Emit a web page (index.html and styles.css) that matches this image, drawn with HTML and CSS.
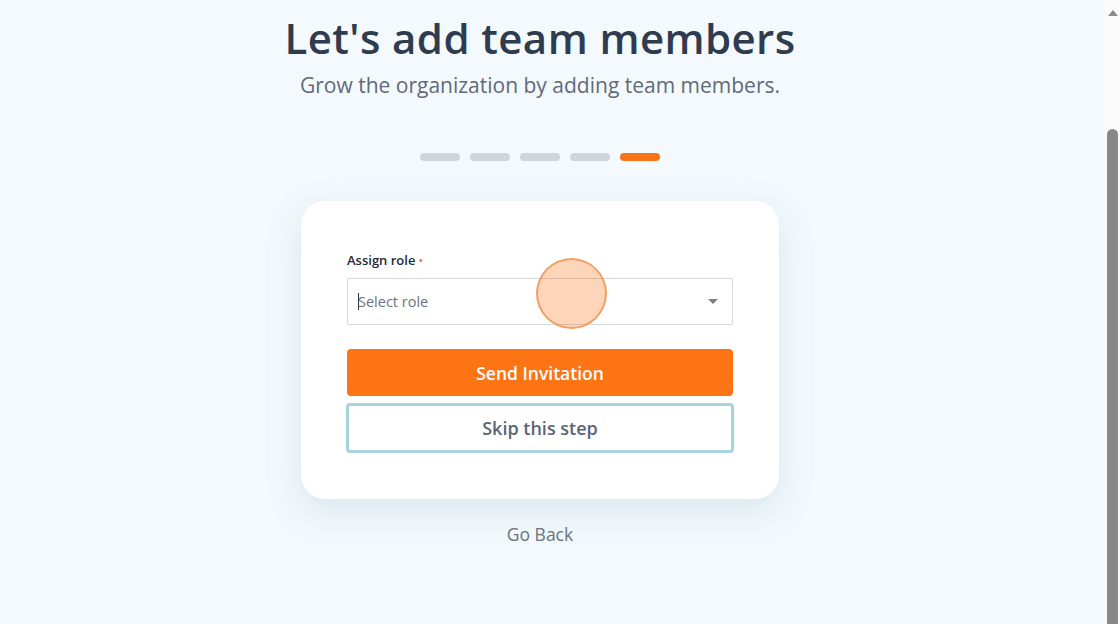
FILE: index.html
```html
<!DOCTYPE html>
<html lang="en">
<head>
  <meta charset="UTF-8">
  <title>Add team members</title>
  <link rel="stylesheet" href="styles.css">
</head>
<body>
  <div class="page">
    <h1 class="title">Let's add team members</h1>
    <p class="subtitle">Grow the organization by adding team members.</p>

    <div class="steps">
      <span class="step"></span>
      <span class="step"></span>
      <span class="step"></span>
      <span class="step"></span>
      <span class="step active"></span>
    </div>

    <div class="card">
      <label class="label">Assign role <span class="req">&bull;</span></label>
      <div class="select">
        <span class="placeholder"><i class="cursor"></i>Select role</span>
        <span class="caret"></span>
        <span class="click"></span>
      </div>
      <button class="btn btn-primary">Send Invitation</button>
      <button class="btn btn-skip">Skip this step</button>
    </div>

    <a class="back">Go Back</a>
  </div>
  <!-- window scrollbar, page is scrolled down -->
  <div class="scrollbar">
    <span class="arrow"></span>
    <span class="thumb"></span>
  </div>
</body>
</html>
```

FILE: styles.css
```css
/*common*/
* {
  box-sizing: border-box;
  margin: 0;
  padding: 0;
}
body {
  height: 624px;
  overflow: hidden;
  display: flex;
  background: #f3f9fc;
  font-family: "Open Sans", "Liberation Sans", sans-serif;
  color: #2f3b4f;
}
.page {
  flex: 1;
  display: flex;
  flex-direction: column;
  align-items: center;
  padding: 13px 25px 0 0;
}
.title {
  font-size: 42px;
  line-height: 50px;
  font-weight: 600;
  color: #2f3b4f;
  letter-spacing: 0.4px;
}
.subtitle {
  margin-top: 8px;
  font-size: 21px;
  line-height: 28px;
  color: #5f6a7b;
}
.steps {
  display: flex;
  gap: 10px;
  margin-top: 54px;
}
.step {
  width: 40px;
  height: 8px;
  border-radius: 4px;
  background: #d1d5db;
}
.step.active {
  background: #f97316;
}
.card {
  margin-top: 40px;
  width: 478px;
  padding: 50px 46px 46px;
  background: #fff;
  border-radius: 24px;
  box-shadow: 0 12px 32px rgba(150, 185, 205, 0.28);
  display: flex;
  flex-direction: column;
}
.label {
  display: block;
  height: 18px;
  font-size: 13px;
  line-height: 18px;
  font-weight: 600;
  color: #1f2937;
}
.req {
  color: #f97316;
  font-size: 11px;
}
.select {
  position: relative;
  margin-top: 9px;
  height: 47px;
  border: 1px solid #d4d7dc;
  border-radius: 2px;
  display: flex;
  align-items: center;
  justify-content: space-between;
  padding: 0 14px 0 10px;
}
.placeholder {
  font-size: 14.5px;
  color: #6b7280;
  display: flex;
  align-items: center;
}
.cursor {
  display: inline-block;
  width: 1px;
  height: 17px;
  background: #333;
  margin-right: -1px;
}
.caret {
  width: 0;
  height: 0;
  border-left: 5px solid transparent;
  border-right: 5px solid transparent;
  border-top: 5px solid #808080;
}
.click {
  position: absolute;
  left: 188px;
  top: -21px;
  width: 71px;
  height: 71px;
  border-radius: 50%;
  background: rgba(249, 115, 22, 0.3);
  border: 2px solid rgba(240, 140, 70, 0.75);
}
.btn {
  font-family: inherit;
  font-size: 17.5px;
  font-weight: 600;
  height: 47px;
  border-radius: 4px;
  cursor: pointer;
}
.btn-primary {
  margin-top: 24px;
  background: #fd7415;
  color: #fff;
  border: none;
}
.btn-skip {
  margin: 7px -1px 0;
  height: 50px;
  font-size: 18px;
  background: #fff;
  color: #5b6475;
  border: 3px solid #a7d2de;
}
.back {
  margin-top: 23px;
  font-size: 17.5px;
  line-height: 24px;
  color: #6b7280;
}
.scrollbar {
  width: 15px;
  background: #fafafa;
  display: flex;
  flex-direction: column;
  align-items: center;
}
.arrow {
  margin-top: 10px;
  width: 0;
  height: 0;
  border-left: 5px solid transparent;
  border-right: 5px solid transparent;
  border-bottom: 6px solid #8a8a8a;
}
.thumb {
  margin-top: 113px;
  flex: 1;
  width: 11px;
  border-radius: 6px 6px 0 0;
  background: #878787;
}
```
